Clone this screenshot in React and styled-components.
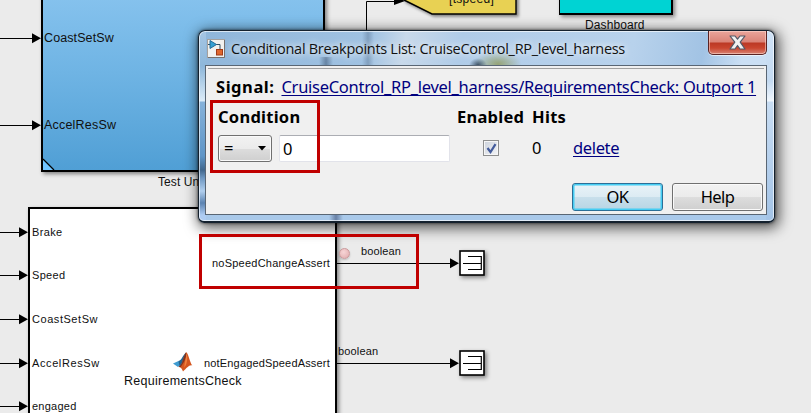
import React from "react";
import styled, { createGlobalStyle, css } from "styled-components";

const GlobalStyle = createGlobalStyle`
  * { box-sizing: border-box; }
  body { margin: 0; overflow: hidden; }
`;

/* ---------- model canvas ---------- */

const Canvas = styled.main`
  position: relative;
  width: 811px;
  height: 413px;
  overflow: hidden;
  background: #ebebeb;
  color: #101010;
  font-family: "Liberation Sans", Arial, sans-serif;
`;

const at = css`
  position: absolute;
  left: ${(p) => p.$x}px;
  top: ${(p) => p.$y}px;
`;

const Label = styled.span`
  ${at}
  font-size: ${(p) => p.$size || 11}px;
  line-height: 14px;
  letter-spacing: ${(p) => p.$spacing ?? 0.4}px;
  white-space: nowrap;
`;

const Block = styled.div`
  ${at}
  width: ${(p) => p.$w}px;
  height: ${(p) => p.$h}px;
  border: 2px solid #000;
  background: #fff;
  box-shadow: 2px 2px 4px rgba(0, 0, 0, 0.45);
`;

const TestUnit = styled(Block)`
  background: linear-gradient(#87c3ee, #6fb4e4 45%, #509fd5);
`;

const Dashboard = styled(Block)`
  border-width: 1px 2px 2px 1px;
  background: #00d3d3;
`;

const Drawing = styled.svg`
  position: absolute;
  inset: 0;
  overflow: visible;
`;

const GotoTag = styled.path`
  fill: #e8d153;
  stroke: #000;
  stroke-width: 1.4px;
  filter: drop-shadow(2px 2px 1.5px rgba(0, 0, 0, 0.45));
`;

const Terminator = styled.svg`
  ${at}
  filter: drop-shadow(2px 2px 2px rgba(0, 0, 0, 0.45));
`;

const Highlight = styled.div`
  ${at}
  width: ${(p) => p.$w}px;
  height: ${(p) => p.$h}px;
  border: 3px solid #c00000;
`;

const Breakpoint = styled.i`
  ${at}
  width: 11px;
  height: 11px;
  border: 1px solid #c99a9c;
  border-radius: 50%;
  background: radial-gradient(circle at 40% 35%, #f7d5d6, #e0aaac);
  box-shadow: 0 1px 2px rgba(0, 0, 0, 0.2);
`;

/* ---------- dialog ---------- */

const Window = styled.section`
  position: absolute;
  left: 198px;
  top: 30px;
  width: 577px;
  height: 193px;
  padding: 0 7px 6px 6px;
  display: flex;
  flex-direction: column;
  border: 1px solid #14212e;
  border-width: 1px 1px 2px;
  border-radius: 7px 7px 6px 6px;
  background:
    radial-gradient(ellipse at center, rgba(25, 45, 65, 0.75), transparent 70%) 270px 27px / 18px 14px no-repeat,
    radial-gradient(ellipse at center, rgba(140, 150, 80, 0.75), transparent 72%) 276px 20px / 46px 26px no-repeat,
    linear-gradient(90deg, transparent, rgba(50, 75, 105, 0.5), transparent) 120px 26px / 14px 9px no-repeat,
    linear-gradient(90deg, transparent, rgba(80, 105, 135, 0.4), transparent) 163px 0 / 12px 36px no-repeat,
    linear-gradient(90deg, transparent, rgba(60, 80, 120, 0.6), transparent) 130px 100% / 14px 8px no-repeat,
    linear-gradient(#a6c6e4 0, #8db7da 35px, #dcebf8 70px, #86b2da 71px, #5f96c8 125px, #41678d 139px, #6f98c2 147px, #b1cfee 160px, #5b83b1 172px, #aeccf2 184px) 0 0 / 7px 100% no-repeat,
    linear-gradient(#cfe2f6 0, #c4daf1 50px, #f1f7fd 70px, #c8ddf3 71px, #a3c3e6 100%) 100% 0 / 8px 100% no-repeat,
    linear-gradient(#a9c9ea, #a9c9ea) 0 100% / 100% 8px no-repeat,
    linear-gradient(100deg, #8fb6da 0, #a0c2e2 170px, #c8d9ea 205px, #b0cce8 260px, #b8d2ec 430px, #a2c3e4 500px, #cbdff4 540px);
  box-shadow:
    inset 0 0 0 1px rgba(255, 255, 255, 0.65),
    0 0 3px rgba(0, 0, 0, 0.7),
    2px 3px 14px 2px rgba(0, 0, 0, 0.65);
`;

const TitleBar = styled.header`
  height: 34px;
  flex: none;
  display: flex;
  align-items: flex-start;
  padding-left: 2px;
  color: #111;
`;

const TitleIcon = styled.svg`
  margin-top: 8px;
  flex: none;
`;

const Title = styled.h1`
  flex: 1;
  margin: 7px 0 0 6px;
  font: 400 14.5px/22px "Open Sans", "Noto Sans", sans-serif;
  letter-spacing: -0.29px;
  white-space: nowrap;
  text-shadow: 0 0 8px #fff, 0 0 6px rgba(255, 255, 255, 0.6);
`;

const CloseButton = styled.button`
  width: 59px;
  height: 24px;
  padding: 0;
  display: grid;
  place-items: center;
  border: 1px solid #5a2323;
  border-top: 0;
  border-radius: 0 0 5px 5px;
  background: linear-gradient(#eaa59b 0, #da8377 11px, #bc3925 12px, #c9452f 17px, #d88374 100%);
  box-shadow: inset 0 0 0 1px rgba(255, 220, 212, 0.55), 0 1px 0 rgba(255, 255, 255, 0.6);
`;

const Client = styled.div`
  flex: 1;
  display: flex;
  flex-direction: column;
  border: 1px solid #596674;
  background: #f0f0f0;
  color: #000;
  font: 400 16.5px/20px "Noto Sans", Tahoma, sans-serif;
`;

const Rule = styled.hr`
  width: calc(100% - 4px);
  height: 1px;
  margin: 2px 2px 0;
  border: 0;
  background: #a0a0a0;
`;

const SignalRow = styled.p`
  display: flex;
  align-items: center;
  gap: 7px;
  height: 22px;
  margin: 7px 0 0 10px;
  white-space: nowrap;
`;

const Strong = styled.strong`
  font-weight: 700;
  letter-spacing: ${(p) => p.$spacing || 0}px;
`;

const Link = styled.a`
  color: #00007f;
  text-decoration: underline;
  text-decoration-thickness: 1px;
  text-underline-offset: 2px;
  letter-spacing: ${(p) => p.$spacing || 0}px;
`;

const Conditions = styled.div`
  display: grid;
  grid-template-columns: 61px 178px 75px 41px 1fr;
  grid-template-rows: 20px 26px;
  row-gap: 8px;
  align-items: center;
  margin: 9px 0 0 12px;
`;

const Heading = styled(Strong)`
  grid-column: span ${(p) => p.$span || 1};
  white-space: nowrap;
`;

const Select = styled.div`
  display: flex;
  align-items: center;
  justify-content: space-between;
  width: 54px;
  height: 27px;
  padding: 0 5px;
  border: 1px solid #707070;
  border-radius: 3px;
  background: linear-gradient(#f2f2f2 0, #ebebeb 50%, #dddddd 51%, #cfcfcf);
  box-shadow: inset 0 0 0 1px #fafafa;
`;

const Field = styled.div`
  width: 171px;
  height: 27px;
  padding-left: 3px;
  border: 1px solid #e2e3ea;
  border-top-color: #abadb3;
  border-radius: 2px;
  background: #fff;
  line-height: 25px;
`;

const Check = styled.span`
  display: grid;
  place-items: center;
  width: 16px;
  height: 16px;
  margin-left: 26px;
  border: 1px solid #8e8f8f;
  background: linear-gradient(135deg, #ccd2dc, #f4f5f7);
  box-shadow: inset 0 0 0 1px #f6f6f6;
`;

const Actions = styled.footer`
  display: flex;
  justify-content: flex-end;
  gap: 9px;
  margin: auto 3px 3px 0;
`;

const Button = styled.button`
  width: 91px;
  height: 28px;
  padding: 0;
  border: 1px solid ${(p) => (p.$primary ? "#2c6f97" : "#707070")};
  border-radius: 3px;
  background: ${(p) =>
    p.$primary
      ? "linear-gradient(#e9f3f8 0, #dcebf3 50%, #c8dfeb 51%, #b7d5e4)"
      : "linear-gradient(#f2f2f2 0, #ebebeb 50%, #dddddd 51%, #cfcfcf)"};
  box-shadow: inset 0 0 0 ${(p) => (p.$primary ? "1.5px #45cdf3" : "1px #fafafa")};
  color: #000;
  font: inherit;
  letter-spacing: ${(p) => (p.$primary ? -0.6 : -0.6)}px;
`;

const inputs = [
  { y: 38, tip: 41 },
  { y: 125, tip: 41 },
  { y: 232, tip: 28 },
  { y: 275, tip: 28 },
  { y: 319, tip: 28 },
  { y: 363, tip: 28 },
  { y: 406, tip: 28 },
];

const outputs = [263, 363];

const ports = [
  { text: "Brake", y: 225, s: 0.35 },
  { text: "Speed", y: 268, s: 0.3 },
  { text: "CoastSetSw", y: 312, s: 0.55 },
  { text: "AccelResSw", y: 356, s: 0.6 },
  { text: "engaged", y: 399, s: 0.25 },
];

function Wire({ from, to, y }) {
  return (
    <g>
      <path d={`M${from} ${y + 0.5}H${to - 7}`} stroke="#000" />
      <path d={`M${to} ${y + 0.2}l-9 -5v10z`} />
    </g>
  );
}

function Sink({ x, y }) {
  return (
    <Terminator $x={x} $y={y} width="26" height="26" viewBox="0 0 26 26">
      <rect x="1" y="1" width="24" height="24" fill="#fff" stroke="#000" strokeWidth="1.6" />
      <path d="M9 6.500H22.300V19.500H9M4 13.500H22" fill="none" stroke="#000" strokeWidth="1.200" />
    </Terminator>
  );
}

function MatlabLogo() {
  return (
    <g transform="translate(173 352)">
      <path d="M0 11.500L5.500 9L8.500 12L5 15Z" fill="#3f9bd0" />
      <path d="M5.500 9C9 8 9.500 3.500 13 0.500C12.500 5 10.500 11 6.500 14.500Z" fill="#24648f" />
      <path d="M13.200 0.300C15.500 1.500 16.500 10 19.300 13.500C16 12.500 14 16 10 19.500C9 17 8 15 5.500 15C10 13 10.500 3 13.200 0.300Z" fill="#d4561f" />
      <path d="M13.200 0.300C13.800 5 11.500 10 7.500 15.200C7 15 6.500 15 5.500 15C10 13 10.500 3 13.200 0.300Z" fill="#7f3320" />
      <path d="M13.300 1C15 5 14.500 11 11.500 15.500C11 12 13.500 6 13.300 1Z" fill="#ef7f3d" />
    </g>
  );
}

function BreakpointDialog() {
  return (
    <Window>
      <TitleBar>
        <TitleIcon width="18" height="19" viewBox="0 0 18 19">
          <rect x=".5" y=".5" width="17" height="18" fill="#f1f1ef" stroke="#a5a19d" />
          <path d="M1 18.500H17.500V1" fill="none" stroke="#77716e" />
          <path d="M1 5.500H4M9 5.500H13V11" fill="none" stroke="#334f63" />
          <path d="M3 1.500L9.500 5.500L3 9.500Z" fill="#35a1d3" stroke="#236b98" />
          <rect x="9.500" y="10.500" width="6" height="5.500" fill="#e0662d" stroke="#a03a17" />
        </TitleIcon>
        <Title>Conditional Breakpoints List: CruiseControl_RP_level_harness</Title>
        <CloseButton aria-label="Close">
          <svg width="17" height="15" viewBox="0 0 17 15">
            <path
              d="M1 1H6L8.500 4.200L11 1H16L11.200 7.200L16 14H11L8.500 10.500L6 14H1L5.800 7.200Z"
              fill="#f1f1f1"
              stroke="#535967"
              strokeWidth="1.2"
              strokeLinejoin="round"
            />
          </svg>
        </CloseButton>
      </TitleBar>
      <Client>
        <Rule />
        <SignalRow>
          <Strong $spacing={0.55}>Signal:</Strong>
          <Link $spacing={-0.28}>CruiseControl_RP_level_harness/RequirementsCheck: Outport 1</Link>
        </SignalRow>
        <Conditions>
          <Heading $span={2} $spacing={0.25}>Condition</Heading>
          <Heading $spacing={0.25}>Enabled</Heading>
          <Heading $span={2} $spacing={0.3}>Hits</Heading>
          <Select>
            <span>=</span>
            <svg width="8" height="5" viewBox="0 0 8 5">
              <path d="M0 0H8L4 4.500Z" />
            </svg>
          </Select>
          <Field>0</Field>
          <Check>
            <svg width="11" height="11" viewBox="0 0 11 11">
              <path d="M1.500 5L4.500 9L9.500 1.200" fill="none" stroke="#435b9b" strokeWidth="2.200" />
            </svg>
          </Check>
          <span>0</span>
          <Link $spacing={-0.35}>delete</Link>
        </Conditions>
        <Actions>
          <Button $primary>OK</Button>
          <Button>Help</Button>
        </Actions>
      </Client>
    </Window>
  );
}

export default function App() {
  return (
    <>
      <GlobalStyle />
      <Canvas>
        <TestUnit $x={41} $y={-10} $w={284} $h={182} />
        <Block $x={28} $y={207} $w={309} $h={230} />
        <Dashboard $x={559} $y={-10} $w={114} $h={25} />
        <Drawing width="811" height="413">
          <path d="M43 159V170H54Z" fill="#70c4ff" />
          <path d="M43 159L54 170" stroke="#000" strokeWidth="1.3" />
          <path d="M366.500 31V1.500H396" fill="none" stroke="#000" />
          <path d="M394 -4L405 1L394 5Z" />
          <GotoTag d="M404 0L432 14H516V-4H404Z" />
          {inputs.map((w) => (
            <Wire key={w.y} from={0} to={w.tip} y={w.y} />
          ))}
          {outputs.map((y) => (
            <Wire key={y} from={336} to={459} y={y} />
          ))}
          <MatlabLogo />
        </Drawing>
        <Label $x={44} $y={31} $size={12.5} $spacing={0.1}>CoastSetSw</Label>
        <Label $x={44} $y={118} $size={12.5} $spacing={0.2}>AccelResSw</Label>
        <Label $x={158} $y={175} $size={12} $spacing={0.1}>Test Unit</Label>
        <Label $x={449} $y={-8} $size={12} $spacing={0.3}>[tspeed]</Label>
        <Label $x={585} $y={18} $size={12} $spacing={0.1}>Dashboard</Label>
        {ports.map((p) => (
          <Label key={p.text} $x={32} $y={p.y} $spacing={p.s}>{p.text}</Label>
        ))}
        <Label $x={212} $y={256} $spacing={0.23}>noSpeedChangeAssert</Label>
        <Label $x={204} $y={356} $spacing={0.17}>notEngagedSpeedAssert</Label>
        <Label $x={361} $y={244} $spacing={0.1}>boolean</Label>
        <Label $x={338} $y={344} $spacing={0.15}>boolean</Label>
        <Label $x={124} $y={374} $size={12.5} $spacing={0.27}>RequirementsCheck</Label>
        <Sink x={459} y={250} />
        <Sink x={459} y={350} />
        <Breakpoint $x={339} $y={248} />
        <BreakpointDialog />
        <Highlight $x={210} $y={100} $w={110} $h={73} />
        <Highlight $x={199} $y={234} $w={220} $h={55} />
      </Canvas>
    </>
  );
}
